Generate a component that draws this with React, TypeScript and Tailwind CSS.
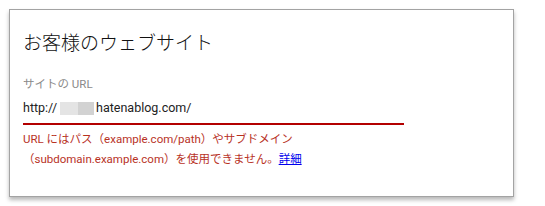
export default function App() {
  return (
    <div className="h-[206px] w-[545px] bg-white pl-[9px] pt-[9px]" style={{ fontFamily: 'Roboto, "Noto Sans CJK JP", sans-serif' }}>
      <div className="h-[188px] w-[505px] border border-[#a3a3a3] bg-white px-[13px] pt-[20px] shadow-[0_3px_4px_rgba(0,0,0,0.28)]">
        <h1 className="text-[19px] leading-[28px] font-light text-[#111]">お客様のウェブサイト</h1>
        <div className="mt-[17px] text-[11.5px] leading-[18px] text-[#8a8a8a]">サイトの URL</div>
        <div className="mt-[5px] flex w-[381px] items-center border-b-2 border-[#b30000] pb-[5px] text-[12.5px] leading-[20px] text-[#222]">
          <span>http://</span>
          <span className="ml-[3px] mr-[2px] flex h-[13px]">
            <span className="inline-block h-full w-[18px] bg-[#e4e4e4]" />
            <span className="inline-block h-full w-[16px] bg-[#d2d2d2]" />
          </span>
          <span>hatenablog.com/</span>
        </div>
        <p className="mt-[4px] text-[11.5px] leading-[20px] text-[#b8321f]">
          URL にはパス（example.com/path）やサブドメイン
          <br />
          （subdomain.example.com）を使用できません。
          <a href="#" className="text-[#0000ee] underline">詳細</a>
        </p>
      </div>
    </div>
  );
}
